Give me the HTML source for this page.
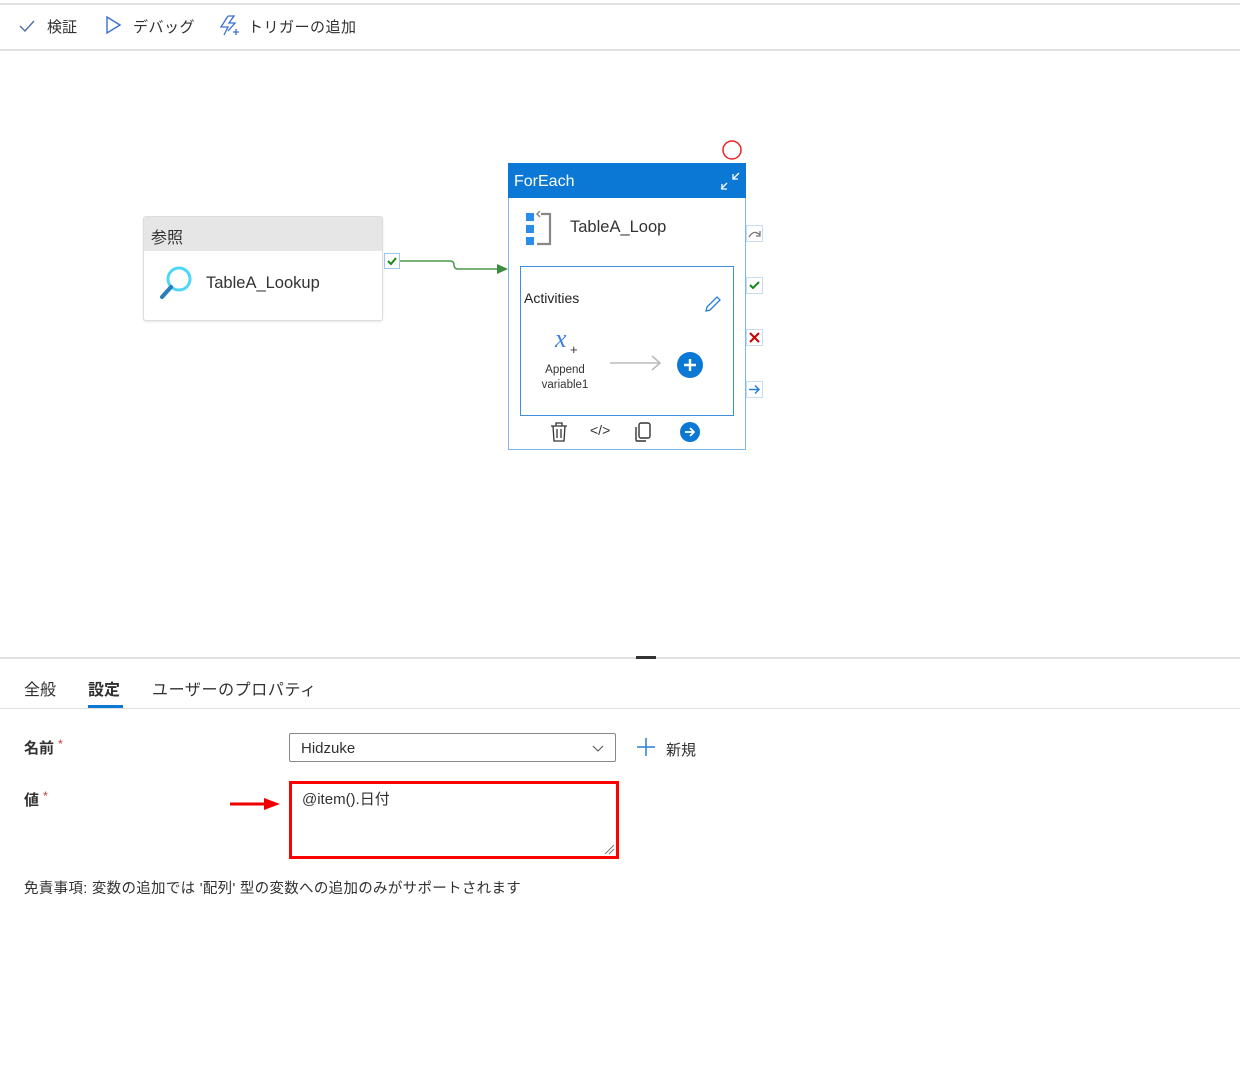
<!DOCTYPE html>
<html><head><meta charset="utf-8"><style>
*{margin:0;padding:0;box-sizing:border-box}
body{width:1240px;height:1068px;background:#fff;position:relative;overflow:hidden;font-family:"Liberation Sans","Noto Sans CJK JP",sans-serif;color:#323130}
.a{position:absolute}
.t{font-size:15px;white-space:nowrap}
</style></head><body>
<div class="a" style="left:0;top:3px;width:1240px;height:2px;background:#e1e1e1"></div>
<div class="a" style="left:0;top:49px;width:1240px;height:2px;background:#e1e1e1"></div>
<svg class="a" style="left:18px;top:18px" width="18" height="16"><path d="M2 8 L7 13 L16 3" stroke="#4a6fa5" stroke-width="1.4" fill="none"/></svg>
<div class="a t" style="left:47px;top:16px">検証</div>
<svg class="a" style="left:104px;top:15px" width="18" height="20"><path d="M3 2 L16 10 L3 18 Z" stroke="#3b6fd6" stroke-width="1.4" fill="none"/></svg>
<div class="a t" style="left:133px;top:16px;letter-spacing:0.5px">デバッグ</div>
<svg class="a" style="left:218px;top:14px" width="22" height="24"><path d="M10 2 L3 13 H10 L6 21 M10 2 H16 L11 9 H17 L10 17" stroke="#3b6fd6" stroke-width="1.3" fill="none"/><path d="M15 18 h6 M18 15 v6" stroke="#3b6fd6" stroke-width="1.3"/></svg>
<div class="a t" style="left:248px;top:16px;letter-spacing:0.5px">トリガーの追加</div>

<!-- lookup -->
<div class="a" style="left:143px;top:216px;width:240px;height:105px;border:1px solid #ddd;border-radius:3px;background:#fff;box-shadow:0 1px 2px rgba(0,0,0,.1)"></div>
<div class="a" style="left:144px;top:217px;width:238px;height:34px;background:#e6e6e6"></div>
<div class="a t" style="left:151px;top:224px;font-size:16px">参照</div>
<svg class="a" style="left:158px;top:264px" width="38" height="38"><circle cx="21" cy="15" r="11" stroke="#4fd6f7" stroke-width="3" fill="none"/><path d="M13 23 L4 33" stroke="#2a7db8" stroke-width="4" stroke-linecap="round"/></svg>
<div class="a t" style="left:206px;top:274px;font-size:16.5px;color:#333">TableA_Lookup</div>
<div class="a" style="left:384px;top:253px;width:16px;height:16px;border:1px solid #9cc8f0;background:#fff"></div>
<svg class="a" style="left:385px;top:254px" width="14" height="14"><path d="M3 7 L6 10 L11 4" stroke="#1a8a1a" stroke-width="2" fill="none"/></svg>
<svg class="a" style="left:398px;top:252px" width="112" height="24"><path d="M2 9 H52 Q56 9 56 13 Q56 17 60 17 H100" stroke="#4a9a4a" stroke-width="1.5" fill="none"/><path d="M99 12 L110 17 L99 22 Z" fill="#3d8b3d"/></svg>

<!-- foreach -->
<svg class="a" style="left:721px;top:139px" width="22" height="22"><circle cx="11" cy="11" r="9" stroke="#e22" stroke-width="1.5" fill="none"/></svg>
<div class="a" style="left:508px;top:163px;width:238px;height:287px;border:1px solid #7db7ec;background:#fff"></div>
<div class="a" style="left:508px;top:163px;width:238px;height:35px;background:#0a78d4"></div>
<div class="a t" style="left:514px;top:173px;color:#fff;font-size:16px">ForEach</div>
<svg class="a" style="left:718px;top:170px" width="24" height="22"><path d="M3 19 L9 13 M4 14 V19 H9 M21 3 L15 9 M15 4 V9 H20" stroke="#fff" stroke-width="1.3" fill="none"/></svg>
<svg class="a" style="left:524px;top:211px" width="30" height="36"><rect x="2" y="2" width="8" height="8" fill="#2a8ee8"/><rect x="2" y="14" width="8" height="8" fill="#2a8ee8"/><rect x="2" y="26" width="8" height="8" fill="#2a8ee8"/><path d="M17 3 H26 V33 H13" stroke="#888" stroke-width="2.2" fill="none"/><path d="M16 0 L13 3 L16 6" stroke="#888" stroke-width="1.5" fill="none"/></svg>
<div class="a t" style="left:570px;top:218px;font-size:16.5px;color:#333">TableA_Loop</div>
<div class="a" style="left:520px;top:266px;width:214px;height:150px;border:1.5px solid #3d8fe0"></div>
<div class="a t" style="left:524px;top:290px;font-size:14px;color:#222">Activities</div>
<svg class="a" style="left:703px;top:294px" width="20" height="20"><path d="M3 17 L4 13 L14 3 L17 6 L7 16 Z" stroke="#2a7fd4" stroke-width="1.3" fill="none"/></svg>
<div class="a" style="left:555px;top:324px;font-family:'Liberation Serif',serif;font-style:italic;font-size:26px;color:#3b7fe0">x</div>
<div class="a" style="left:570px;top:342px;font-size:13px;color:#333">+</div>
<div class="a" style="left:541px;top:363px;font-size:11.5px;color:#333;text-align:center;line-height:15px;width:48px">Append variable1</div>
<svg class="a" style="left:608px;top:353px" width="56" height="20"><path d="M2 10 H52 M44 3 L52 10 L44 17" stroke="#bbb" stroke-width="1.6" fill="none"/></svg>
<svg class="a" style="left:676px;top:351px" width="28" height="28"><circle cx="14" cy="14" r="13" fill="#0a78d4"/><path d="M14 8 V20 M8 14 H20" stroke="#fff" stroke-width="2.4"/></svg>
<svg class="a" style="left:548px;top:421px" width="22" height="22"><path d="M3 5 H19 M8 5 V2 H14 V5 M5 5 L6 20 H16 L17 5 M9 8 V17 M13 8 V17" stroke="#333" stroke-width="1.3" fill="none"/></svg>
<div class="a" style="left:590px;top:422px;font-size:14px;color:#333">&lt;/&gt;</div>
<svg class="a" style="left:632px;top:421px" width="22" height="22"><rect x="7" y="2" width="11" height="15" rx="2" stroke="#333" stroke-width="1.4" fill="none"/><path d="M4 6 V19 Q4 20 5 20 H14" stroke="#333" stroke-width="1.4" fill="none"/></svg>
<svg class="a" style="left:679px;top:421px" width="22" height="22"><circle cx="11" cy="11" r="10" fill="#0a78d4"/><path d="M6 11 H15 M11 7 L15 11 L11 15" stroke="#fff" stroke-width="1.8" fill="none"/></svg>
<!-- side handles -->
<div class="a" style="left:746px;top:225px;width:17px;height:17px;border:1px solid #c5dcf3"></div>
<svg class="a" style="left:746px;top:225px" width="17" height="17"><path d="M3 12 Q8 4 14 10 M14 6 V11 H10" stroke="#777" stroke-width="1.3" fill="none"/></svg>
<div class="a" style="left:746px;top:277px;width:17px;height:17px;border:1px solid #c5dcf3"></div>
<svg class="a" style="left:746px;top:277px" width="17" height="17"><path d="M4 8 L7 11 L13 5" stroke="#1a8a1a" stroke-width="2" fill="none"/></svg>
<div class="a" style="left:746px;top:329px;width:17px;height:17px;border:1px solid #c5dcf3"></div>
<svg class="a" style="left:746px;top:329px" width="17" height="17"><path d="M4 4 L13 13 M13 4 L4 13" stroke="#c00" stroke-width="2"/></svg>
<div class="a" style="left:746px;top:381px;width:17px;height:17px;border:1px solid #c5dcf3"></div>
<svg class="a" style="left:746px;top:381px" width="17" height="17"><path d="M3 8.5 H13 M9 4.5 L13 8.5 L9 12.5" stroke="#2a7fd4" stroke-width="1.5" fill="none"/></svg>

<!-- bottom panel -->
<div class="a" style="left:0;top:657px;width:1240px;height:2px;background:#e1e1e1"></div>
<div class="a" style="left:636px;top:656px;width:20px;height:3px;background:#333"></div>
<div class="a t" style="left:24px;top:676px;font-size:16px">全般</div>
<div class="a t" style="left:88px;top:676px;font-size:16px;font-weight:bold">設定</div>
<div class="a" style="left:88px;top:705px;width:35px;height:3px;background:#0a78d4"></div>
<div class="a t" style="left:152px;top:676px;font-size:16px;letter-spacing:0.6px">ユーザーのプロパティ</div>
<div class="a" style="left:0;top:708px;width:1240px;height:1px;background:#e1e1e1"></div>
<div class="a t" style="left:24px;top:737px;font-weight:bold">名前 <span style="color:#c33;font-weight:normal;font-size:12px;vertical-align:top">*</span></div>
<div class="a" style="left:289px;top:733px;width:327px;height:29px;border:1px solid #8a8886;border-radius:2px"></div>
<div class="a t" style="left:301px;top:740px">Hidzuke</div>
<svg class="a" style="left:591px;top:742px" width="14" height="12"><path d="M2 4 L7 9 L12 4" stroke="#555" stroke-width="1.1" fill="none"/></svg>
<svg class="a" style="left:636px;top:737px" width="20" height="20"><path d="M10 1 V19 M1 10 H19" stroke="#2a7fd4" stroke-width="1.5"/></svg>
<div class="a t" style="left:666px;top:739px">新規</div>
<div class="a t" style="left:24px;top:789px;font-weight:bold">値 <span style="color:#c33;font-weight:normal;font-size:12px;vertical-align:top">*</span></div>
<svg class="a" style="left:228px;top:796px" width="54" height="16"><path d="M2 8 H40" stroke="#e00" stroke-width="3"/><path d="M36 2 L52 8 L36 14 Z" fill="#e00"/></svg>
<div class="a" style="left:289px;top:781px;width:330px;height:78px;border:3px solid #f00"></div>
<div class="a t" style="left:302px;top:788px">@item().日付</div>
<svg class="a" style="left:603px;top:843px" width="12" height="12"><path d="M2 11 L11 2 M6 11 L11 6" stroke="#777" stroke-width="1"/></svg>
<div class="a t" style="left:24px;top:877px;font-size:14.5px;letter-spacing:0.3px">免責事項: 変数の追加では '配列' 型の変数への追加のみがサポートされます</div>
</body></html>
